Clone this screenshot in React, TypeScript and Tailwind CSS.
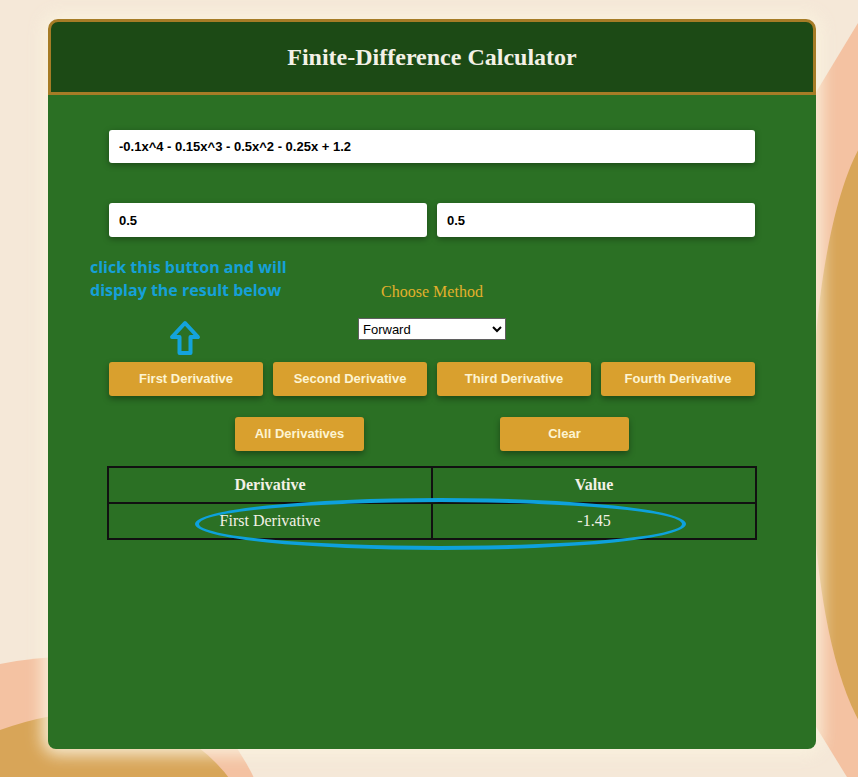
import { useState } from "react";

const buttons = [
  "First Derivative",
  "Second Derivative",
  "Third Derivative",
  "Fourth Derivative",
];

function Backdrop() {
  return (
    <svg
      className="absolute inset-0 h-full w-full"
      viewBox="0 0 861 782"
      preserveAspectRatio="none"
    >
      <rect width="861" height="782" fill="#f5e8d8" />
      <path d="M861 18 L775 160 L775 660 L850 782 L861 782 Z" fill="#f4c2a2" />
      <path d="M861 145 C800 250 790 600 861 725 Z" fill="#d8a558" />
      <path d="M0 664 Q70 650 130 662 Q215 695 256 782 L0 782 Z" fill="#f4c2a2" />
      <path d="M0 730 Q60 708 120 712 Q195 730 232 782 L0 782 Z" fill="#d8a558" />
      <rect x="858" width="3" height="782" fill="#ffffff" />
      <rect y="777" width="861" height="5" fill="#ffffff" />
    </svg>
  );
}

function UpArrow() {
  return (
    <svg width="32" height="36" viewBox="0 0 32 36" fill="none">
      <path
        d="M16 3 L29 17 L21.5 17 L21.5 33 L10.5 33 L10.5 17 L3 17 Z"
        stroke="#14a3dc"
        strokeWidth="4"
        strokeLinejoin="round"
      />
    </svg>
  );
}

export default function App() {
  const [method, setMethod] = useState("Forward");

  return (
    <div className="relative min-h-screen w-full overflow-hidden">
      <Backdrop />
      <div className="relative pl-[48px] pt-[19px]">
        <div className="flex h-[730px] w-[768px] flex-col rounded-[10px] shadow-[0_0_16px_6px_rgba(250,242,222,0.9)]">
          <div className="flex h-[76px] items-center justify-center rounded-t-[10px] border-[3px] border-[#a67c26] bg-[#1c4a15]">
            <h1 className="font-['Liberation_Serif',serif] text-[24px] font-bold text-[#f3f1e6]">
              Finite-Difference Calculator
            </h1>
          </div>

          <div className="flex flex-1 flex-col rounded-b-[8px] bg-[#2b7024] px-[61px] pt-[35px]">
            <input
              className="h-[33px] w-full rounded-[3px] bg-white px-[10px] font-['Liberation_Sans',sans-serif] text-[13px] font-bold text-black shadow-[0_2px_6px_rgba(0,0,0,0.35)] outline-none"
              defaultValue="-0.1x^4 - 0.15x^3 - 0.5x^2 - 0.25x + 1.2"
            />
            <div className="mt-[40px] grid grid-cols-2 gap-[10px]">
              <input
                className="h-[34px] rounded-[3px] bg-white px-[10px] font-['Liberation_Sans',sans-serif] text-[13px] font-bold text-black shadow-[0_2px_6px_rgba(0,0,0,0.35)] outline-none"
                defaultValue="0.5"
              />
              <input
                className="h-[34px] rounded-[3px] bg-white px-[10px] font-['Liberation_Sans',sans-serif] text-[13px] font-bold text-black shadow-[0_2px_6px_rgba(0,0,0,0.35)] outline-none"
                defaultValue="0.5"
              />
            </div>

            <div className="relative flex flex-col items-center pt-[46px]">
              <p className="absolute left-[-19px] top-[19px] font-['Open_Sans',sans-serif] text-[16px] font-bold leading-[23px] text-[#16a0d8]">
                click this button and will
                <br />
                display the result below
              </p>
              <div className="absolute left-[60px] top-[83px]">
                <UpArrow />
              </div>
              <label className="h-[18px] font-['Liberation_Serif',serif] text-[16px] leading-[18px] text-[#e2b02c]">
                Choose Method
              </label>
              <select
                value={method}
                onChange={(e) => setMethod(e.target.value)}
                className="mt-[17px] h-[22px] w-[148px] border border-[#5f5f5f] bg-white font-['Liberation_Sans',sans-serif] text-[13px] text-black"
              >
                <option>Forward</option>
                <option>Backward</option>
                <option>Central</option>
              </select>
            </div>

            <div className="mt-[22px] grid grid-cols-4 gap-[10px]">
              {buttons.map((b) => (
                <button
                  key={b}
                  className="h-[34px] rounded-[3px] bg-[#d9a02e] font-['Liberation_Sans',sans-serif] text-[13px] font-bold text-[#fdf4d2] shadow-[0_3px_6px_rgba(0,0,0,0.35)]"
                >
                  {b}
                </button>
              ))}
            </div>

            <div className="mt-[21px] flex justify-center gap-[136px]">
              <button className="h-[34px] w-[129px] rounded-[3px] bg-[#d9a02e] font-['Liberation_Sans',sans-serif] text-[13px] font-bold text-[#fdf4d2] shadow-[0_3px_6px_rgba(0,0,0,0.35)]">
                All Derivatives
              </button>
              <button className="h-[34px] w-[129px] rounded-[3px] bg-[#d9a02e] font-['Liberation_Sans',sans-serif] text-[13px] font-bold text-[#fdf4d2] shadow-[0_3px_6px_rgba(0,0,0,0.35)]">
                Clear
              </button>
            </div>

            <div className="relative -mx-[2px] mt-[15px]">
              <table className="w-full border-collapse font-['Liberation_Serif',serif] text-[16px] text-[#f3f1e6]">
                <thead>
                  <tr className="h-[36px]">
                    <th className="w-1/2 border-2 border-[#111] font-bold">Derivative</th>
                    <th className="w-1/2 border-2 border-[#111] font-bold">Value</th>
                  </tr>
                </thead>
                <tbody>
                  <tr className="h-[36px]">
                    <td className="border-2 border-[#111] text-center">First Derivative</td>
                    <td className="border-2 border-[#111] text-center">-1.45</td>
                  </tr>
                </tbody>
              </table>
              <div className="absolute left-[88px] top-[32px] h-[52px] w-[491px] rounded-[50%] border-4 border-[#0ea1dc]" />
            </div>
          </div>
        </div>
      </div>
    </div>
  );
}
